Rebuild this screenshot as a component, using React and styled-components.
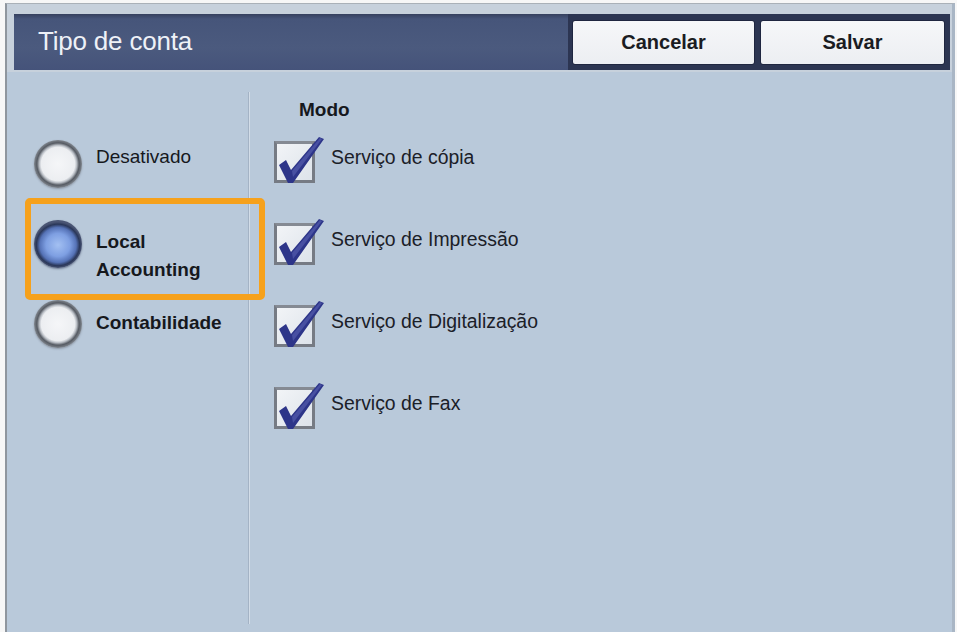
import React from "react";
import styled, { createGlobalStyle, css } from "styled-components";

const Global = createGlobalStyle`
  html, body { margin: 0; padding: 0; background: #f7f7f7; }
  body { font-family: "Liberation Sans", Arial, sans-serif; }
  *, *::before, *::after { box-sizing: border-box; }
`;

const Frame = styled.div`
  margin: 3px 0 0 5px;
  width: 950px;
  height: 629px;
  border-left: 2px solid #8f969e;
  border-top: 1px solid #aab1b8;
  border-right: 3px solid #a9b6c5;
  background: #b9c9da;
  display: flex;
  flex-direction: column;
`;

const HeaderWrap = styled.div`
  background: #c7d1dc;
  padding: 10px 2px 2px 7px;
`;

const Header = styled.div`
  height: 56px;
  display: flex;
  align-items: center;
  justify-content: space-between;
  background: linear-gradient(180deg, #36415f 0px, #46557a 5px, #4b5a7e 60%, #45537a 100%);
  padding: 0 0 0 24px;
`;

const Title = styled.div`
  color: #eef1f7;
  font-size: 26px;
  letter-spacing: -0.2px;
  margin-top: -2px;
`;

const ButtonGroup = styled.div`
  display: flex;
  gap: 5px;
  padding: 3px 5px 3px 4px;
  height: 100%;
  align-items: center;
  background: #2c3552;
`;

const Button = styled.div`
  width: ${(p) => p.$w}px;
  height: 45px;
  background: linear-gradient(180deg, #f6f7f9 0%, #eceef2 100%);
  border: 1px solid #1f2640;
  border-radius: 3px;
  display: flex;
  align-items: center;
  justify-content: center;
  font-weight: bold;
  font-size: 20px;
  color: #1a1c22;
`;

const Body = styled.div`
  flex: 1;
  display: flex;
`;

const LeftCol = styled.div`
  width: 241px;
  padding: 52px 0 0 27px;
  display: flex;
  flex-direction: column;
`;

const Divider = styled.div`
  width: 3px;
  margin: 20px 0 8px;
  background: linear-gradient(90deg, #a4b3c5 0 1px, #d3dde8 1px 2px, #b9c9da 2px);
`;

const RightCol = styled.div`
  flex: 1;
  padding: 27px 0 0 23px;
  display: flex;
  flex-direction: column;
`;

const RadioRow = styled.div`
  position: relative;
  height: 80px;
  display: flex;
  align-items: center;
  gap: 14px;
  ${(p) =>
    p.$highlight &&
    css`
      &::before {
        content: "";
        position: absolute;
        left: -9px;
        top: -6px;
        width: 240px;
        height: 102px;
        border: 6px solid #f6a11c;
        border-radius: 5px;
        pointer-events: none;
      }
    `}
`;

const Radio = styled.div`
  width: 48px;
  height: 48px;
  flex: none;
  border-radius: 50%;
  ${(p) =>
    p.$on
      ? css`
          background: radial-gradient(closest-side at 50% 52%, #a3c0f2 0%, #7e9fe2 50%, #5572b6 76%, #2a3759 90%, #4a5574 100%);
          box-shadow: 0 1px 2px rgba(30, 40, 70, 0.5);
        `
      : css`
          background: radial-gradient(closest-side, #f5f6f8 0%, #eceef1 70%, #b9bec5 78%, #565b63 88%, #80868e 100%);
          box-shadow: 0 1px 2px rgba(60, 60, 70, 0.35);
        `}
`;

const RadioLabel = styled.div`
  font-size: 19px;
  line-height: 28px;
  color: #16181d;
  font-weight: ${(p) => (p.$bold ? "bold" : "normal")};
  margin-top: ${(p) => p.$shift || 0}px;
`;

const Mode = styled.div`
  font-size: 19px;
  line-height: 22px;
  font-weight: bold;
  color: #16181d;
  margin-left: 25px;
`;

const CheckRow = styled.div`
  height: 82px;
  display: flex;
  align-items: center;
  gap: 16px;
`;

const Box = styled.div`
  position: relative;
  width: 41px;
  height: 42px;
  flex: none;
  border: 3px solid #767b84;
  border-top-color: #858a93;
  background: linear-gradient(135deg, #f2f4f7 0%, #dde3ea 100%);
  svg {
    position: absolute;
    left: -2px;
    top: -9px;
  }
`;

const CheckLabel = styled.div`
  font-size: 19.4px;
  color: #1b2028;
  margin-bottom: 10px;
`;

const Check = () => (
  <svg width="52" height="52" viewBox="0 0 52 52">
    <path d="M4 30 L11 25 L16 35 L44 2 L49 4 L18 48 L13 48 Z" fill="#2d3589" />
    <path d="M17 36 L45 3 L47 4 L18 42 Z" fill="#5a62b3" opacity="0.6" />
  </svg>
);

const radios = [
  { label: "Desativado", on: false, bold: false, shift: -14 },
  { label: "Local Accounting", lines: ["Local", "Accounting"], on: true, bold: true, highlight: true, shift: 24 },
  { label: "Contabilidade", on: false, bold: true, shift: -2 },
];

const services = [
  "Serviço de cópia",
  "Serviço de Impressão",
  "Serviço de Digitalização",
  "Serviço de Fax",
];

export default function App() {
  return (
    <>
      <Global />
      <Frame>
        <HeaderWrap>
          <Header>
            <Title>Tipo de conta</Title>
            <ButtonGroup>
              <Button $w={183}>Cancelar</Button>
              <Button $w={185}>Salvar</Button>
            </ButtonGroup>
          </Header>
        </HeaderWrap>
        <Body>
          <LeftCol>
            {radios.map((r) => (
              <RadioRow key={r.label} $highlight={r.highlight}>
                <Radio $on={r.on} />
                <RadioLabel $bold={r.bold} $shift={r.shift}>
                  {r.lines
                    ? r.lines.map((l) => <div key={l}>{l}</div>)
                    : r.label}
                </RadioLabel>
              </RadioRow>
            ))}
          </LeftCol>
          <Divider />
          <RightCol>
            <Mode>Modo</Mode>
            {services.map((s) => (
              <CheckRow key={s}>
                <Box>
                  <Check />
                </Box>
                <CheckLabel>{s}</CheckLabel>
              </CheckRow>
            ))}
          </RightCol>
        </Body>
      </Frame>
    </>
  );
}
